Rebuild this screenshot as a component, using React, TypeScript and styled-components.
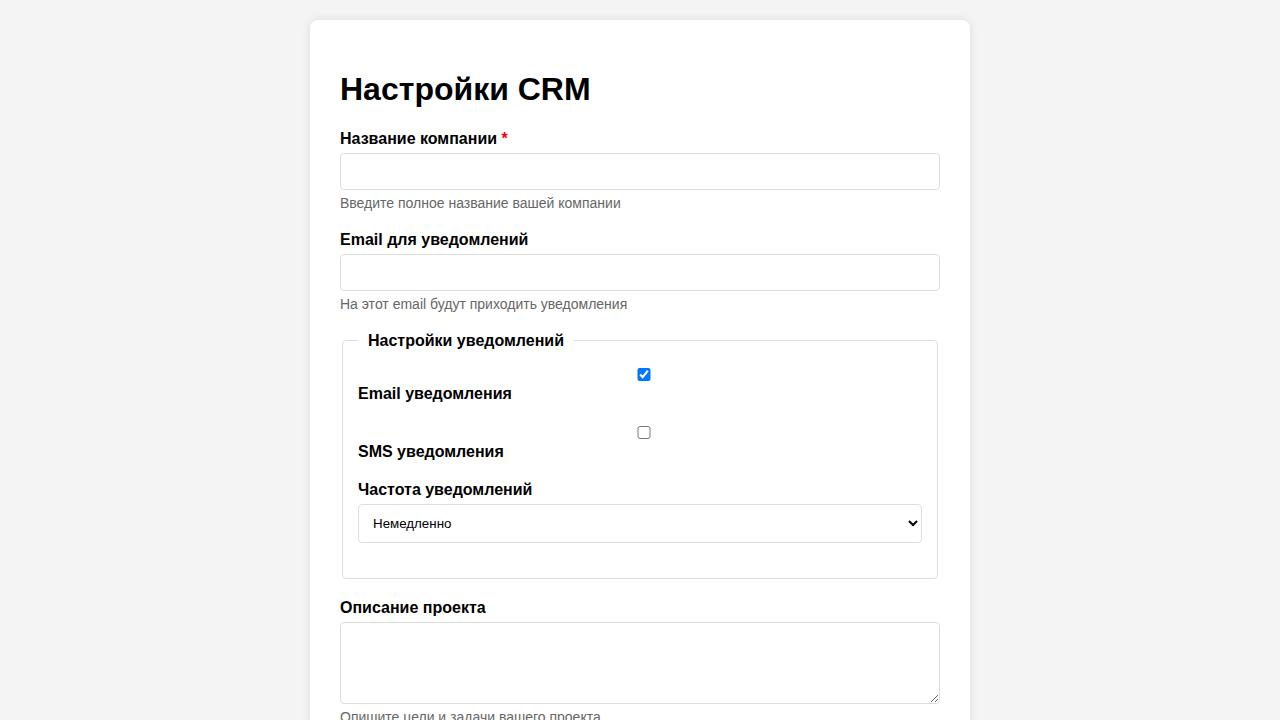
import React from "react";
import styled, { createGlobalStyle } from "styled-components";

const GlobalStyle = createGlobalStyle`
  html, body {
    margin: 0;
    padding: 0;
  }
  body {
    background: #f4f4f4;
    font-family: "Liberation Sans", Arial, sans-serif;
    color: #000;
    padding: 20px 0;
  }
`;

const Card = styled.div`
  max-width: 600px;
  margin: 0 auto;
  padding: 30px;
  background: #fff;
  border-radius: 8px;
  box-shadow: 0 0 10px rgba(0, 0, 0, 0.1);
`;

const Title = styled.h1`
  font-size: 32px;
  font-weight: bold;
  margin: 21.44px 0;
`;

const Group = styled.div`
  margin-bottom: 20px;
  font-size: 16px;
`;

const Label = styled.label`
  display: block;
  font-weight: bold;
  font-size: 16px;
  margin-bottom: 5px;
`;

const Required = styled.span`
  color: red;
`;

const TextInput = styled.input`
  display: block;
  width: 100%;
  box-sizing: border-box;
  padding: 10px;
  border: 1px solid #ddd;
  border-radius: 4px;
  font-family: "Liberation Sans", Arial, sans-serif;
  font-size: 13.333px;
  background: #fff;
`;

const Select = styled.select`
  display: block;
  width: 100%;
  box-sizing: border-box;
  padding: 10px;
  border: 1px solid #ddd;
  border-radius: 4px;
  font-family: "Liberation Sans", Arial, sans-serif;
  font-size: 13.333px;
  background: #fff;
  color: #000;
`;

const TextArea = styled.textarea`
  display: block;
  width: 100%;
  box-sizing: border-box;
  height: 82px;
  padding: 10px;
  border: 1px solid #ddd;
  border-radius: 4px;
  font-family: "Liberation Sans", Arial, sans-serif;
  font-size: 13.333px;
`;

const Checkbox = styled.input`
  display: inline-block;
  width: 100%;
  height: 13px;
  margin: 3px 3px 3px 4px;
  box-sizing: border-box;
  vertical-align: baseline;
`;

const Help = styled.small`
  display: block;
  margin-top: 5px;
  font-size: 14px;
  color: #666;
`;

const Fieldset = styled.fieldset`
  margin: 0 2px 20px;
  padding: 15px;
  border: 1px solid #ddd;
  border-radius: 4px;
`;

const Legend = styled.legend`
  padding: 0 10px;
  font-weight: bold;
  font-size: 16px;
`;

export default function App() {
  return (
    <>
      <GlobalStyle />
      <Card>
        <Title>Настройки CRM</Title>
        <form onSubmit={(e) => e.preventDefault()}>
          <Group>
            <Label htmlFor="company">
              Название компании <Required>*</Required>
            </Label>
            <TextInput id="company" type="text" />
            <Help>Введите полное название вашей компании</Help>
          </Group>
          <Group>
            <Label htmlFor="email">Email для уведомлений</Label>
            <TextInput id="email" type="email" />
            <Help>На этот email будут приходить уведомления</Help>
          </Group>
          <Fieldset>
            <Legend>Настройки уведомлений</Legend>
            <Group>
              <Checkbox id="emailNotif" type="checkbox" defaultChecked />
              <Label htmlFor="emailNotif">Email уведомления</Label>
            </Group>
            <Group>
              <Checkbox id="smsNotif" type="checkbox" />
              <Label htmlFor="smsNotif">SMS уведомления</Label>
            </Group>
            <Group>
              <Label htmlFor="freq">Частота уведомлений</Label>
              <Select id="freq" defaultValue="immediate">
                <option value="immediate">Немедленно</option>
                <option value="hourly">Каждый час</option>
                <option value="daily">Ежедневно</option>
              </Select>
            </Group>
          </Fieldset>
          <Group>
            <Label htmlFor="desc">Описание проекта</Label>
            <TextArea id="desc" />
            <Help>Опишите цели и задачи вашего проекта</Help>
          </Group>
        </form>
      </Card>
    </>
  );
}
